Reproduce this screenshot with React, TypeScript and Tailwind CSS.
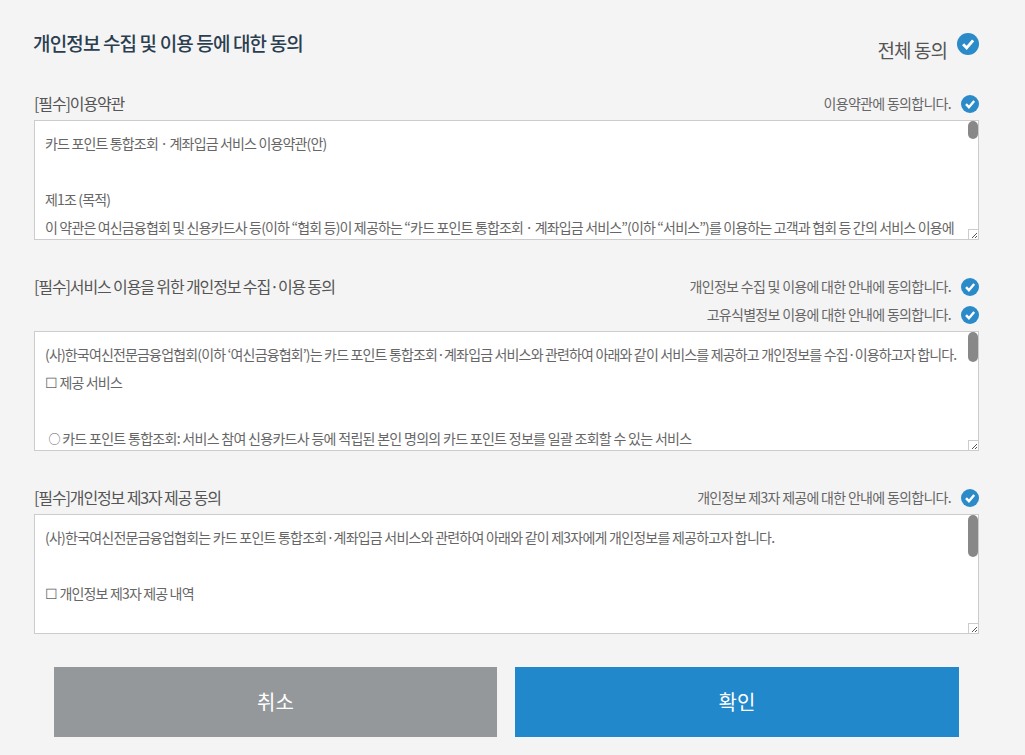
import { ReactNode } from "react";

function Check({ size = 18 }: { size?: number }) {
  return (
    <svg width={size} height={size} viewBox="0 0 18 18" className="shrink-0">
      <circle cx="9" cy="9" r="9" fill="#2a8bc8" />
      <path d="M5 9.2l2.9 3L13.2 6" fill="none" stroke="#fff" strokeWidth="2.4" />
    </svg>
  );
}

function AgreeLine({ text }: { text: string }) {
  return (
    <div className="flex items-center justify-end h-[28px]">
      <span className="pb-[2px] text-[14px] tracking-[-0.05em] text-[#666]">{text}</span>
      <span className="ml-[10px]">
        <Check />
      </span>
    </div>
  );
}

function TermsBox({ lines, thumb }: { lines: ReactNode[]; thumb: string }) {
  return (
    <div className="relative h-[120px] mt-[2px] bg-white border border-[#ccc] overflow-hidden pt-[8px] pl-[10px] pr-[20px]">
      {lines.map((line, i) => (
        <p key={i} className="h-[28px] leading-[28px] text-[14px] tracking-[-0.06em] text-[#666] whitespace-pre">
          {line}
        </p>
      ))}
      <div className={`absolute top-0 right-0 w-[10px] rounded-[5px] bg-[#888] ${thumb}`} />
      <div className="absolute bottom-0 right-0 w-[10px] h-[10px] bg-white border-l border-t border-[#ccc]">
        <svg width="9" height="9" viewBox="0 0 9 9" className="block">
          <path d="M8 3L3 8M8 6L6 8" stroke="#555" strokeWidth="1" fill="none" />
        </svg>
      </div>
    </div>
  );
}

export default function App() {
  return (
    <div
      className="w-full h-[755px] bg-[#f4f4f4] overflow-hidden pl-[34px] pr-[46px]"
      style={{ fontFamily: "'Noto Sans CJK KR', sans-serif" }}
    >
      <div className="flex justify-between h-[90px]">
        <h1 className="mt-[30px] -ml-[1px] text-[19px] leading-[26px] font-medium tracking-[-0.045em] text-[#2b3e50]">
          개인정보 수집 및 이용 등에 대한 동의
        </h1>
        <div className="flex items-start mt-[33px]">
          <span className="mt-[4px] text-[19px] leading-[26px] tracking-[-0.05em] text-[#555]">전체 동의</span>
          <span className="ml-[10px]">
            <Check size={22} />
          </span>
        </div>
      </div>

      <div className="flex justify-between items-center h-[28px]">
        <h2 className="pb-[2px] text-[16px] tracking-[-0.07em] text-[#555]">[필수]이용약관</h2>
        <AgreeLine text="이용약관에 동의합니다." />
      </div>
      <TermsBox
        thumb="h-[18px]"
        lines={[
          "카드 포인트 통합조회 · 계좌입금 서비스 이용약관(안)",
          "",
          "제1조 (목적)",
          "이 약관은 여신금융협회 및 신용카드사 등(이하 “협회 등)이 제공하는 “카드 포인트 통합조회 · 계좌입금 서비스”(이하 “서비스”)를 이용하는 고객과 협회 등 간의 서비스 이용에",
        ]}
      />

      <div className="flex justify-between mt-[33px]">
        <h2 className="text-[16px] h-[26px] leading-[26px] tracking-[-0.07em] text-[#555]">
          [필수]서비스 이용을 위한 개인정보 수집·이용 동의
        </h2>
        <div>
          <AgreeLine text="개인정보 수집 및 이용에 대한 안내에 동의합니다." />
          <AgreeLine text="고유식별정보 이용에 대한 안내에 동의합니다." />
        </div>
      </div>
      <TermsBox
        thumb="h-[30px]"
        lines={[
          "(사)한국여신전문금융업협회(이하 ‘여신금융협회’)는 카드 포인트 통합조회·계좌입금 서비스와 관련하여 아래와 같이 서비스를 제공하고 개인정보를 수집·이용하고자 합니다.",
          "☐ 제공 서비스",
          "",
          <span className="tracking-[-0.05em]">
            {" "}
            <span className="text-[12px] ml-[1px]">○</span> 카드 포인트 통합조회: 서비스 참여 신용카드사 등에 적립된 본인 명의의 카드 포인트 정보를 일괄 조회할 수 있는 서비스
          </span>,
        ]}
      />

      <div className="flex justify-between items-center h-[28px] mt-[33px]">
        <h2 className="pb-[2px] text-[16px] tracking-[-0.07em] text-[#555]">[필수]개인정보 제3자 제공 동의</h2>
        <AgreeLine text="개인정보 제3자 제공에 대한 안내에 동의합니다." />
      </div>
      <TermsBox
        thumb="h-[42px]"
        lines={[
          <span className="tracking-[-0.055em]">
            (사)한국여신전문금융업협회는 카드 포인트 통합조회·계좌입금 서비스와 관련하여 아래와 같이 제3자에게 개인정보를 제공하고자 합니다.
          </span>,
          "",
          "☐ 개인정보 제3자 제공 내역",
        ]}
      />

      <div className="flex gap-[18px] mt-[33px] pl-[20px] pr-[20px]">
        <button className="w-[443px] h-[70px] bg-[#94989b] text-white text-[20px]">취소</button>
        <button className="w-[444px] h-[70px] bg-[#2188cc] text-white text-[20px]">확인</button>
      </div>
    </div>
  );
}
